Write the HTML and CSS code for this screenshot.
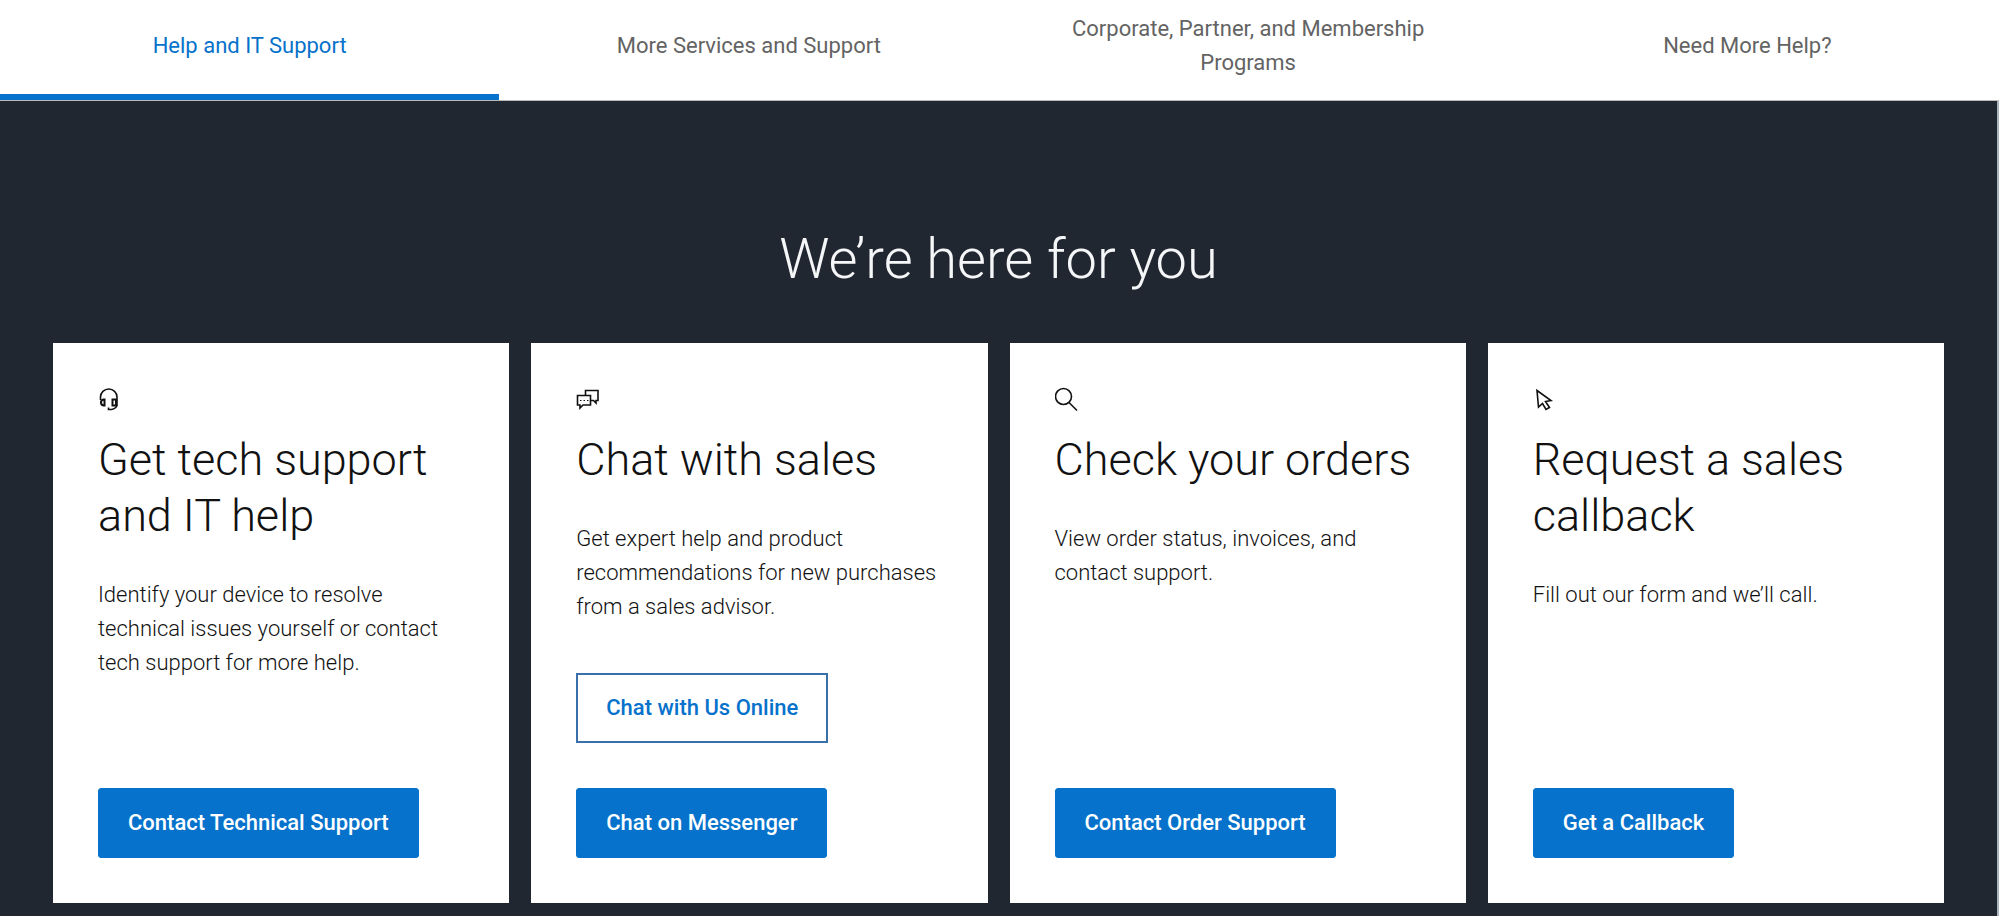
FILE: index.html
```html
<!DOCTYPE html>
<html lang="en">
<head>
<meta charset="utf-8">
<meta name="viewport" content="width=device-width, initial-scale=1">
<title>Help and IT Support</title>
<link rel="stylesheet" href="styles.css">
</head>
<body>
<nav class="tabs" aria-label="Support sections">
  <a class="tab tab-active" href="#help" aria-current="page">Help and IT Support</a>
  <a class="tab" href="#services">More Services and Support</a>
  <a class="tab" href="#programs">Corporate, Partner, and Membership Programs</a>
  <a class="tab" href="#more">Need More Help?</a>
</nav>
<main class="hero" id="help">
  <h1 class="hero-title">We’re here for you</h1>
  <div class="cards">
    <section class="card">
      <svg class="icon" viewBox="0 0 28 28" aria-hidden="true">
        <path d="M2.500 14V11a8.250 8 0 0 1 16.500 0V19.500Q18 22.500 13.500 23.500H10.500V21.500"/>
        <path class="bold" d="M6.500 13.500V19.500H5.500Q3 19 3 16.500T5.500 13.500ZM14.500 13.500V19.500H18V13.500Z"/>
      </svg>
      <h2 class="card-title">Get tech support and IT help</h2>
      <p class="card-text">Identify your device to resolve technical issues yourself or contact tech support for more help.</p>
      <div class="actions"><a class="button" href="#tech">Contact Technical Support</a></div>
    </section>
    <section class="card">
      <svg class="icon" viewBox="0 0 28 28" aria-hidden="true">
        <path d="M9.500 9V4.500H22V14.500H20V17L17.500 14.500H15"/>
        <path d="M1.500 9.500H14.500V19H7L4 22V19H1.500Z"/>
        <path class="dots" d="M4 14.500H5.500M7.500 14.500H9M11 14.500H12.500"/>
      </svg>
      <h2 class="card-title">Chat with sales</h2>
      <p class="card-text">Get expert help and product recommendations for new purchases from a sales advisor.</p>
      <div class="actions">
        <a class="button button-outline" href="#chat">Chat with Us Online</a>
        <a class="button" href="#messenger">Chat on Messenger</a>
      </div>
    </section>
    <section class="card">
      <svg class="icon" viewBox="0 0 28 28" aria-hidden="true">
        <circle cx="8.500" cy="10.500" r="8"/>
        <path d="M14 16.500L22 24.500"/>
      </svg>
      <h2 class="card-title">Check your orders</h2>
      <p class="card-text">View order status, invoices, and contact support.</p>
      <div class="actions"><a class="button" href="#orders">Contact Order Support</a></div>
    </section>
    <section class="card">
      <svg class="icon" viewBox="0 0 28 28" aria-hidden="true">
        <path d="M4 4.500L18 14.500L12.500 15.500L16.500 21.500L13 23.500L9.500 17.500L5.500 21Z"/>
      </svg>
      <h2 class="card-title">Request a sales callback</h2>
      <p class="card-text">Fill out our form and we’ll call.</p>
      <div class="actions"><a class="button" href="#callback">Get a Callback</a></div>
    </section>
  </div>
</main>
</body>
</html>
```
FILE: styles.css
```css
* {
  box-sizing: border-box;
}

body {
  margin: 0;
  min-height: 100vh;
  display: flex;
  flex-direction: column;
  background: #fff;
  color: #111;
  font-family: Roboto, "Liberation Sans", sans-serif;
  font-size: 22px;
  line-height: 34px;
}

.tabs {
  display: grid;
  grid-template-columns: repeat(4, 1fr);
  padding-right: 2px;
  border-bottom: 1px solid #bbb;
}

.tab {
  display: flex;
  align-items: center;
  justify-content: center;
  padding: 12px 44px 14px;
  border-bottom: 6px solid transparent;
  color: #636363;
  text-align: center;
  text-decoration: none;
}

.tab-active {
  color: #0672cb;
  border-bottom-color: #0672cb;
}

.hero {
  flex: 1;
  padding: 119px 53px 13px;
  background: #212731;
  border-right: 2px solid #a9b4be;
}

.hero-title {
  margin: 0 0 45px;
  color: #f5f6f7;
  font-size: 56px;
  font-weight: 300;
  line-height: 78px;
  text-align: center;
}

.cards {
  display: grid;
  grid-template-columns: repeat(4, 1fr);
  gap: 22px;
}

.card {
  display: flex;
  flex-direction: column;
  align-items: flex-start;
  padding: 43px 45px 45px;
  background: #fff;
}

.icon {
  width: 28px;
  height: 28px;
  margin-bottom: 18px;
  fill: none;
  stroke: #111;
  stroke-width: 1.6;
}

.icon .bold {
  stroke-width: 2;
}

.icon .dots {
  stroke-width: 1;
}

.card-title {
  margin: 0 0 34px;
  font-size: 45px;
  font-weight: 300;
  line-height: 56px;
}

.card-text {
  margin: 0 0 49px;
  font-weight: 300;
}

.actions {
  display: flex;
  flex-direction: column;
  align-items: flex-start;
  gap: 45px;
  margin-top: auto;
}

.button {
  padding: 17px 29px;
  border: 1px solid #0672cb;
  border-radius: 3px;
  background: #0672cb;
  color: #fff;
  font-weight: 500;
  text-decoration: none;
}

.button-outline {
  border: 2px solid #3a70aa;
  padding: 16px 28px;
  border-radius: 0;
  background: #fff;
  color: #0672cb;
}
```
